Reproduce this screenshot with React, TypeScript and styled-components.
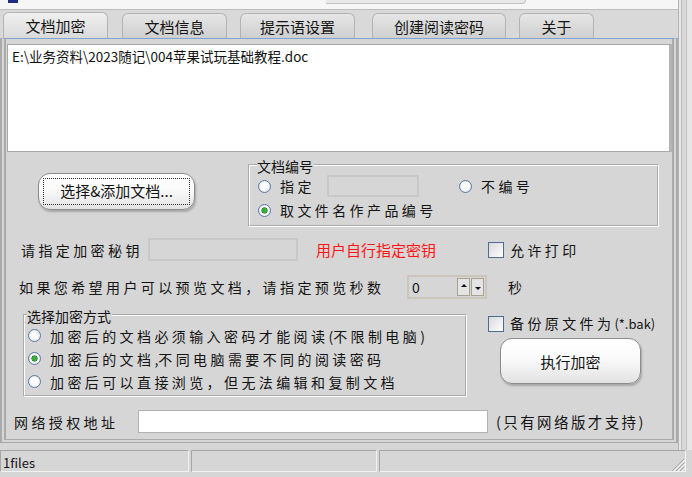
import styled, { createGlobalStyle } from "styled-components";

const GlobalStyle = createGlobalStyle`
  html, body {
    margin: 0;
    padding: 0;
    background: #d6d6d6;
  }
  body {
    font-family: "Noto Sans CJK SC", "Liberation Sans", sans-serif;
    color: #141414;
  }
  * {
    box-sizing: border-box;
  }
`;

const tabs = [
  { label: "文档加密", width: 105, ml: 3, active: true },
  { label: "文档信息", width: 105, ml: 14 },
  { label: "提示语设置", width: 115, ml: 13 },
  { label: "创建阅读密码", width: 134, ml: 17 },
  { label: "关于", width: 75, ml: 13 },
];

export default function App() {
  return (
    <Window>
      <GlobalStyle />
      <Body>
        <Main>
          <TitleStrip>
            <AppIcon />
            <EdgeCurve />
          </TitleStrip>
          <TabStrip>
            {tabs.map((tab) => (
              <Tab key={tab.label} $width={tab.width} $ml={tab.ml} $active={tab.active}>
                {tab.label}
              </Tab>
            ))}
          </TabStrip>
          <Panel>
            <FileList>
              <FileItem>E:\业务资料\2023随记\004苹果试玩基础教程.doc</FileItem>
            </FileList>

            <RowA>
              <PushButton $width={157} $height={37} $ml={38} $mt={21}>
                <FocusRing>选择&添加文档...</FocusRing>
              </PushButton>
              <Group $width={411} $height={71} $ml={53} $pl={8}>
                <Legend>文档编号</Legend>
                <GroupLine>
                  <RadioItem $width={69}>
                    <RadioMark />
                    <Spaced>指定</Spaced>
                  </RadioItem>
                  <Field $width={92} $height={22} $disabled />
                  <RadioItem $ml={40}>
                    <RadioMark />
                    <Spaced>不编号</Spaced>
                  </RadioItem>
                </GroupLine>
                <GroupLine>
                  <RadioItem>
                    <RadioMark $checked />
                    <Spaced>取文件名作产品编号</Spaced>
                  </RadioItem>
                </GroupLine>
              </Group>
            </RowA>

            <Row $mt={11}>
              <Label $ml={21} $width={127}>请指定加密秘钥</Label>
              <Field $width={150} $height={23} $disabled />
              <Hint $ml={18} $width={172}>用户自行指定密钥</Hint>
              <CheckItem>
                <CheckMark />
                <Spaced>允许打印</Spaced>
              </CheckItem>
            </Row>

            <Row $mt={14}>
              <Label $ml={19} $width={388}>如果您希望用户可以预览文档，请指定预览秒数</Label>
              <Spinner>
                <SpinValue>0</SpinValue>
                <SpinButton $up />
                <SpinButton />
              </Spinner>
              <Label $ml={21}>秒</Label>
            </Row>

            <RowD>
              <Group $width={444} $height={91} $ml={23} $pl={3}>
                <Legend>选择加密方式</Legend>
                <ModeLine>
                  <RadioMark />
                  <Spaced>
                    加密后的文档必须输入密码才能阅读<Paren>(</Paren>不限制电脑<Paren>)</Paren>
                  </Spaced>
                </ModeLine>
                <ModeLine>
                  <RadioMark $checked />
                  <Spaced>加密后的文档<Paren>,</Paren>不同电脑需要不同的阅读密码</Spaced>
                </ModeLine>
                <ModeLine>
                  <RadioMark />
                  <Spaced>加密后可以直接浏览，但无法编辑和复制文档</Spaced>
                </ModeLine>
              </Group>
              <SideColumn>
                <CheckItem>
                  <CheckMark />
                  <Spaced>
                    备份原文件为<Small>(*.bak)</Small>
                  </Spaced>
                </CheckItem>
                <PushButton $width={141} $height={46} $ml={12} $mt={6}>
                  执行加密
                </PushButton>
              </SideColumn>
            </RowD>

            <Row $mt={13}>
              <Label $ml={14} $width={124}>网络授权地址</Label>
              <Field $width={350} $height={23} />
              <Note>(只有网络版才支持)</Note>
            </Row>
          </Panel>
        </Main>
        <Rail />
      </Body>
      <StatusBar>
        <StatusCell $width={189}>1files</StatusCell>
        <StatusCell $width={186} />
        <StatusCell $width={307}>
          <Grip width="16" height="16" viewBox="0 0 16 16">
            <path d="M15 3 L3 15 M15 7 L7 15 M15 11 L11 15" stroke="#a8a8a8" strokeWidth="1" />
            <path d="M16 4 L4 16 M16 8 L8 16 M16 12 L12 16" stroke="#f6f6f6" strokeWidth="1" />
          </Grip>
        </StatusCell>
      </StatusBar>
    </Window>
  );
}

const Window = styled.div`
  width: 692px;
  height: 477px;
  display: flex;
  flex-direction: column;
  background: #d6d6d6;
  overflow: hidden;
`;

const Body = styled.div`
  display: flex;
  height: 450px;
`;

const Main = styled.div`
  width: 678px;
  display: flex;
  flex-direction: column;
`;

const Rail = styled.div`
  flex: 1;
  background: linear-gradient(
    90deg,
    #b4b4b4 0 1px,
    #e8e8e8 1px 3px,
    #bdbdbd 3px 4px,
    #d8d8d8 4px 8px,
    #c2c2c2 8px 9px,
    #e6e6e6 9px
  );
`;

const TitleStrip = styled.div`
  height: 10px;
  background: #f6f6f6;
  border-bottom: 1px solid #bdbdbd;
  display: flex;
  align-items: flex-start;
`;

const AppIcon = styled.div`
  width: 10px;
  height: 3px;
  margin-left: 8px;
  background: #1f2c86;
`;

const EdgeCurve = styled.div`
  width: 200px;
  height: 4px;
  margin-left: 308px;
  background: #e8e8e8;
  border-bottom: 1px solid #c4c4c4;
  border-right: 1px solid #c4c4c4;
  border-bottom-right-radius: 12px;
`;

const TabStrip = styled.div`
  height: 28px;
  display: flex;
  align-items: flex-end;
  background: #d9d9d9;
`;

const Tab = styled.div<{ $width: number; $ml: number; $active?: boolean }>`
  width: ${(p) => p.$width}px;
  margin-left: ${(p) => p.$ml}px;
  height: ${(p) => (p.$active ? 26 : 25)}px;
  display: flex;
  align-items: center;
  justify-content: center;
  font-size: 15px;
  color: #151515;
  border: 1px solid #b3b3b3;
  border-bottom: none;
  border-radius: 6px 6px 0 0;
  background: ${(p) =>
    p.$active
      ? "linear-gradient(#f0f0f0, #dadada)"
      : "linear-gradient(#e6e6e6, #cfcfcf)"};
`;

const Panel = styled.div`
  height: 405px;
  border-top: 1px solid #7ea4d2;
  border-left: 6px double #aaaaaa;
  border-right: 6px double #aaaaaa;
  border-bottom: 4px double #aaaaaa;
  background: #d6d6d6;
  display: flex;
  flex-direction: column;
`;

const FileList = styled.div`
  margin: 5px 0 0 1px;
  height: 108px;
  background: #ffffff;
  border: 1px solid #a8a8a8;
  border-right: 3px solid #b4b4b4;
  padding: 3px 0 0 4px;
`;

const FileItem = styled.div`
  font-size: 13.5px;
  line-height: 16px;
  color: #111;
`;

const RowA = styled.div`
  display: flex;
  align-items: flex-start;
  height: 75px;
  margin-left: -6px;
`;

const Row = styled.div<{ $mt: number }>`
  display: flex;
  align-items: center;
  height: 23px;
  margin-top: ${(p) => p.$mt}px;
  margin-left: -6px;
`;

const RowD = styled.div`
  display: flex;
  align-items: flex-start;
  margin-top: 4px;
  margin-left: -6px;
`;

const PushButton = styled.div<{ $width: number; $height: number; $ml: number; $mt: number }>`
  width: ${(p) => p.$width}px;
  height: ${(p) => p.$height}px;
  margin-left: ${(p) => p.$ml}px;
  margin-top: ${(p) => p.$mt}px;
  border: 1px solid #8c8c8c;
  border-radius: 12px;
  background: linear-gradient(#ffffff, #fafafa 45%, #e2e2e2);
  box-shadow: 1px 2px 2px rgba(0, 0, 0, 0.22);
  display: flex;
  align-items: center;
  justify-content: center;
  font-size: 15px;
  color: #141414;
  padding: 4px;
`;

const FocusRing = styled.span`
  width: 100%;
  height: 100%;
  border: 1px dotted #333;
  display: flex;
  align-items: center;
  justify-content: center;
  padding-bottom: 2px;
`;

const Group = styled.fieldset<{ $width: number; $height: number; $ml: number; $pl: number }>`
  width: ${(p) => p.$width}px;
  height: ${(p) => p.$height}px;
  margin: 4px 0 0 ${(p) => p.$ml}px;
  padding: 0 0 0 ${(p) => p.$pl}px;
  min-width: 0;
  border: 2px groove #ffffff;
`;

const Legend = styled.legend`
  font-size: 14px;
  line-height: 15px;
  padding: 3px 1px 0 0;
  margin-left: -1px;
  color: #141414;
`;

const GroupLine = styled.div`
  display: flex;
  align-items: center;
  height: 24px;
`;

const ModeLine = styled.div`
  display: flex;
  align-items: center;
  gap: 9px;
  height: 23px;
`;

const RadioItem = styled.div<{ $width?: number; $ml?: number }>`
  display: flex;
  align-items: center;
  gap: 9px;
  width: ${(p) => (p.$width ? `${p.$width}px` : "auto")};
  margin-left: ${(p) => p.$ml ?? 0}px;
`;

const RadioMark = styled.span<{ $checked?: boolean }>`
  flex: none;
  width: 13px;
  height: 13px;
  border-radius: 50%;
  border: 1px solid #5a7aa2;
  background: ${(p) =>
    p.$checked
      ? "radial-gradient(circle, #38b038 0 2.2px, #2c6a2c 2.8px, #ffffff 3.4px, #dfe4ea 6.5px)"
      : "radial-gradient(circle, #ffffff 0 3px, #dde2e9 6.5px)"};
`;

const CheckItem = styled.div`
  display: flex;
  align-items: center;
  gap: 6px;
`;

const CheckMark = styled.span`
  flex: none;
  width: 16px;
  height: 16px;
  border: 1px solid #4d6c94;
  background: linear-gradient(135deg, #d8d8d8, #ffffff);
`;

const Spaced = styled.span`
  font-size: 14px;
  letter-spacing: 3.4px;
  white-space: nowrap;
  line-height: 16px;
`;

const Paren = styled.span`
  letter-spacing: 0;
`;

const Small = styled.span`
  font-size: 13px;
  letter-spacing: 0;
`;

const Label = styled.span<{ $ml: number; $width?: number }>`
  flex: none;
  margin-left: ${(p) => p.$ml}px;
  width: ${(p) => (p.$width ? `${p.$width}px` : "auto")};
  font-size: 14px;
  letter-spacing: 3.4px;
  white-space: nowrap;
`;

const Hint = styled.span<{ $ml: number; $width: number }>`
  flex: none;
  margin-left: ${(p) => p.$ml}px;
  width: ${(p) => p.$width}px;
  font-size: 15px;
  color: #ff1414;
`;

const Note = styled.span`
  margin-left: 8px;
  font-size: 14.5px;
  letter-spacing: 2.4px;
  white-space: nowrap;
`;

const Field = styled.div<{ $width: number; $height: number; $disabled?: boolean }>`
  flex: none;
  width: ${(p) => p.$width}px;
  height: ${(p) => p.$height}px;
  background: ${(p) => (p.$disabled ? "#d6d6d6" : "#ffffff")};
  border: ${(p) => (p.$disabled ? "2px solid #c8c8c8" : "1px solid #b2b2b2")};
`;

const Spinner = styled.div`
  flex: none;
  width: 80px;
  height: 24px;
  border: 2px solid #cbc6bc;
  display: flex;
  align-items: center;
  padding: 0 1px 0 3px;
  gap: 1px;
`;

const SpinValue = styled.span`
  flex: 1;
  font-size: 14px;
`;

const SpinButton = styled.span<{ $up?: boolean }>`
  width: 13px;
  height: 18px;
  border: 1px solid #aaa291;
  background: #e4e4e4;
  position: relative;
  &::after {
    content: "";
    position: absolute;
    left: 3px;
    top: ${(p) => (p.$up ? 5 : 8)}px;
    border-left: 3px solid transparent;
    border-right: 3px solid transparent;
    ${(p) => (p.$up ? "border-bottom: 3px solid #111;" : "border-top: 3px solid #111;")}
  }
`;

const SideColumn = styled.div`
  margin: 13px 0 0 21px;
  display: flex;
  flex-direction: column;
`;

const StatusBar = styled.div`
  height: 27px;
  display: flex;
  gap: 2px;
  align-items: flex-start;
`;

const StatusCell = styled.div<{ $width: number }>`
  width: ${(p) => p.$width}px;
  height: 22px;
  border: 1px solid;
  border-color: #a6a6a6 #f2f2f2 #f2f2f2 #a6a6a6;
  font-size: 13px;
  padding: 2px 0 0 2px;
  display: flex;
  align-items: flex-start;
`;

const Grip = styled.svg`
  margin-left: auto;
  align-self: flex-end;
  margin-bottom: -1px;
`;
